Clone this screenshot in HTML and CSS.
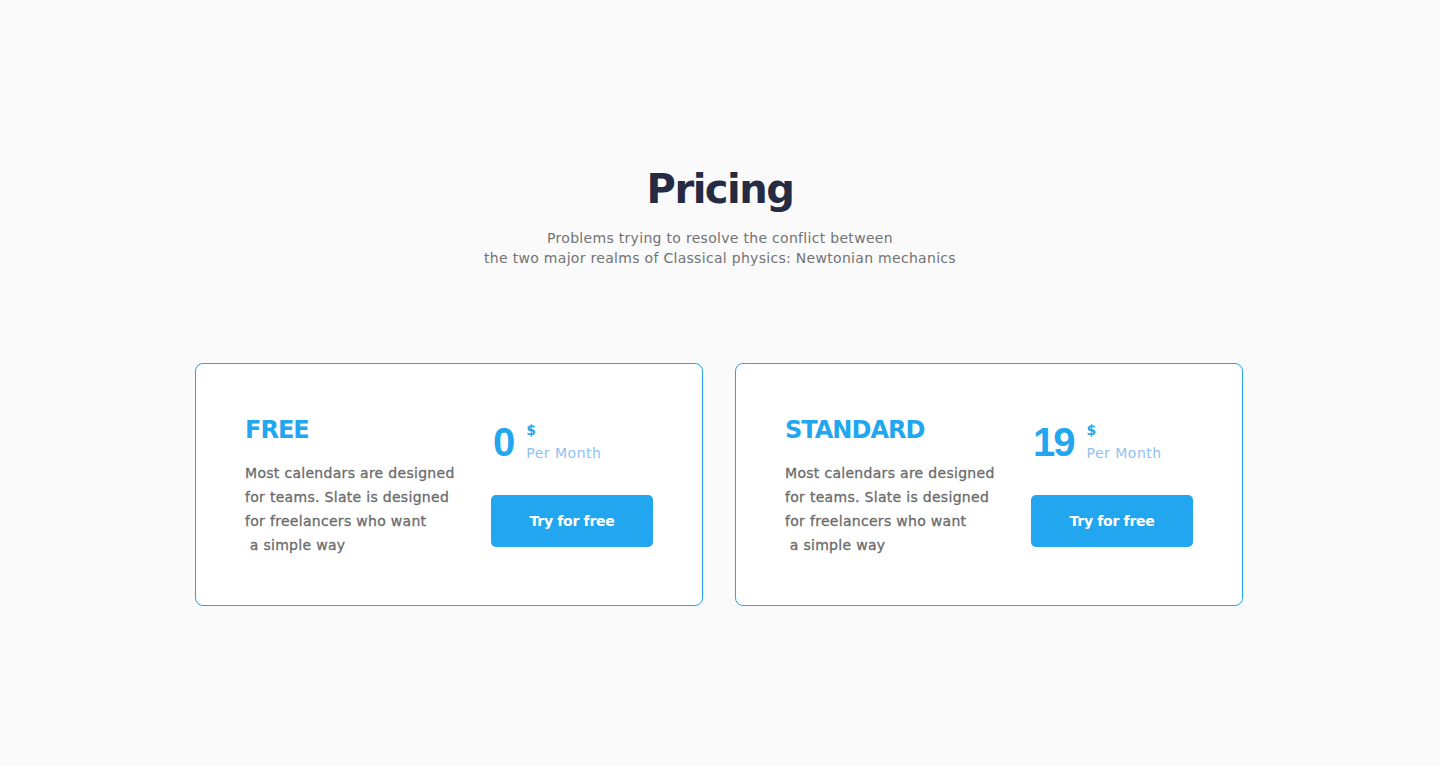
FILE: index.html
```html
<!DOCTYPE html>
<html lang="en">
<head>
    <meta charset="UTF-8">
    <meta name="viewport" content="width=device-width, initial-scale=1.0">
    <title>Pricing</title>
    <link rel="stylesheet" href="styles.css">
</head>
<body>
    <section class="pricing">
        <h2 class="pricing-title">Pricing</h2>
        <p class="pricing-subtitle">Problems trying to resolve the conflict between<br>the two major realms of Classical physics: Newtonian mechanics</p>

        <div class="plans">
            <div class="plan">
                <div class="plan-info">
                    <h3 class="plan-name">FREE</h3>
                    <p class="plan-text">Most calendars are designed<br>for teams. Slate is designed<br>for freelancers who want<br>&nbsp;a simple way</p>
                </div>
                <div class="plan-action">
                    <div class="price">
                        <span class="price-value">0</span>
                        <div class="price-meta">
                            <span class="price-currency">$</span>
                            <span class="price-period">Per Month</span>
                        </div>
                    </div>
                    <button class="plan-button">Try for free</button>
                </div>
            </div>

            <div class="plan">
                <div class="plan-info">
                    <h3 class="plan-name">STANDARD</h3>
                    <p class="plan-text">Most calendars are designed<br>for teams. Slate is designed<br>for freelancers who want<br>&nbsp;a simple way</p>
                </div>
                <div class="plan-action">
                    <div class="price">
                        <span class="price-value">19</span>
                        <div class="price-meta">
                            <span class="price-currency">$</span>
                            <span class="price-period">Per Month</span>
                        </div>
                    </div>
                    <button class="plan-button">Try for free</button>
                </div>
            </div>
        </div>
    </section>
</body>
</html>
```

FILE: styles.css
```css
body {
    margin: 0;
    background: #fafafa;
    font-family: "DejaVu Sans", "Noto Sans", sans-serif;
    color: #737373;
}
.pricing {
    padding-top: 164px;
    display: flex;
    flex-direction: column;
    align-items: center;
}
.pricing-title {
    margin: 0;
    font-size: 40px;
    line-height: 50px;
    font-weight: bold;
    letter-spacing: -1.5px;
    color: #252b42;
}
.pricing-subtitle {
    margin: 14px 0 0;
    font-size: 14px;
    line-height: 20px;
    letter-spacing: 0.3px;
    text-align: center;
    color: #737373;
}
.plans {
    margin-top: 95px;
    margin-left: -2px;
    display: flex;
    gap: 32px;
}
.plan {
    width: 508px;
    box-sizing: border-box;
    display: flex;
    justify-content: space-between;
    padding: 50px 49px 48px;
    background: white;
    border: 1px solid #23a6f0;
    border-radius: 8px;
}
.plan-name {
    margin: 0;
    font-size: 24px;
    line-height: 32px;
    font-weight: bold;
    letter-spacing: -1px;
    color: #23a6f0;
}
.plan-text {
    margin: 15px 0 0;
    font-size: 14px;
    line-height: 24px;
    letter-spacing: 0.3px;
    white-space: nowrap;
    color: #6b6b6b;
    -webkit-text-stroke: 0.3px #6b6b6b;
}
.plan-action {
    width: 162px;
    padding-top: 6px;
}
.price {
    display: flex;
    align-items: flex-start;
    gap: 13px;
    padding-left: 2px;
}
.price-value {
    font-family: "Liberation Sans", Arial, sans-serif;
    font-size: 40px;
    line-height: 44px;
    font-weight: bold;
    letter-spacing: -2px;
    color: #23a6f0;
}
.price-meta {
    display: flex;
    flex-direction: column;
    font-size: 14px;
    line-height: 20px;
}
.price-currency {
    font-weight: bold;
    color: #23a6f0;
}
.price-period {
    margin-top: 3px;
    letter-spacing: 0.5px;
    color: #8ec2f2;
}
.plan-button {
    margin-top: 31px;
    width: 162px;
    height: 52px;
    border: none;
    border-radius: 5px;
    background: #23a6f0;
    color: white;
    font-family: inherit;
    font-size: 14px;
    font-weight: bold;
    letter-spacing: -0.3px;
    cursor: pointer;
}
```
